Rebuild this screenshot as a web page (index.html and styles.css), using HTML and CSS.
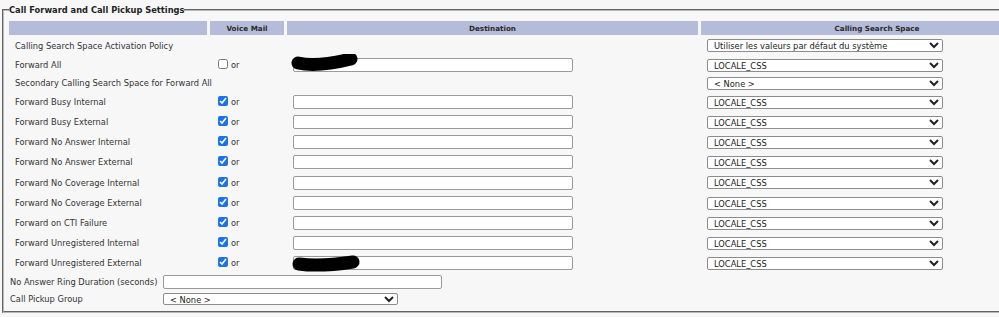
FILE: index.html
```html
<!DOCTYPE html>
<html lang="en">
<head>
<meta charset="utf-8">
<title>Call Forward and Call Pickup Settings</title>
<link rel="stylesheet" href="styles.css">
</head>
<body>
<fieldset class="box">
  <legend class="legend">Call Forward and Call Pickup Settings</legend>
  <div class="grid">
    <div class="th"></div>
    <div class="th">Voice Mail</div>
    <div class="th">Destination</div>
    <div class="th th-css">Calling Search Space</div>

    <div class="lbl">Calling Search Space Activation Policy</div>
    <div class="vm"></div>
    <div class="dest"></div>
    <div class="css"><select class="sel"><option>Utiliser les valeurs par défaut du système</option></select></div>

    <div class="lbl">Forward All</div>
    <div class="vm"><input type="checkbox" class="chk"><span>or</span></div>
    <div class="dest">
      <input type="text" class="txt">
      <svg class="redact r1" width="80" height="24" viewBox="0 0 80 24"><path d="M11 9 C 24 12, 44 10, 64 5" fill="none" stroke="#000" stroke-width="13" stroke-linecap="round"/></svg>
    </div>
    <div class="css"><select class="sel"><option>LOCALE_CSS</option></select></div>

    <div class="lbl">Secondary Calling Search Space for Forward All</div>
    <div class="vm"></div>
    <div class="dest"></div>
    <div class="css"><select class="sel"><option>&lt; None &gt;</option></select></div>

    <div class="lbl">Forward Busy Internal</div>
    <div class="vm"><input type="checkbox" class="chk" checked><span>or</span></div>
    <div class="dest"><input type="text" class="txt"></div>
    <div class="css"><select class="sel"><option>LOCALE_CSS</option></select></div>

    <div class="lbl">Forward Busy External</div>
    <div class="vm"><input type="checkbox" class="chk" checked><span>or</span></div>
    <div class="dest"><input type="text" class="txt"></div>
    <div class="css"><select class="sel"><option>LOCALE_CSS</option></select></div>

    <div class="lbl">Forward No Answer Internal</div>
    <div class="vm"><input type="checkbox" class="chk" checked><span>or</span></div>
    <div class="dest"><input type="text" class="txt"></div>
    <div class="css"><select class="sel"><option>LOCALE_CSS</option></select></div>

    <div class="lbl">Forward No Answer External</div>
    <div class="vm"><input type="checkbox" class="chk" checked><span>or</span></div>
    <div class="dest"><input type="text" class="txt"></div>
    <div class="css"><select class="sel"><option>LOCALE_CSS</option></select></div>

    <div class="lbl">Forward No Coverage Internal</div>
    <div class="vm"><input type="checkbox" class="chk" checked><span>or</span></div>
    <div class="dest"><input type="text" class="txt"></div>
    <div class="css"><select class="sel"><option>LOCALE_CSS</option></select></div>

    <div class="lbl">Forward No Coverage External</div>
    <div class="vm"><input type="checkbox" class="chk" checked><span>or</span></div>
    <div class="dest"><input type="text" class="txt"></div>
    <div class="css"><select class="sel"><option>LOCALE_CSS</option></select></div>

    <div class="lbl">Forward on CTI Failure</div>
    <div class="vm"><input type="checkbox" class="chk" checked><span>or</span></div>
    <div class="dest"><input type="text" class="txt"></div>
    <div class="css"><select class="sel"><option>LOCALE_CSS</option></select></div>

    <div class="lbl">Forward Unregistered Internal</div>
    <div class="vm"><input type="checkbox" class="chk" checked><span>or</span></div>
    <div class="dest"><input type="text" class="txt"></div>
    <div class="css"><select class="sel"><option>LOCALE_CSS</option></select></div>

    <div class="lbl">Forward Unregistered External</div>
    <div class="vm"><input type="checkbox" class="chk" checked><span>or</span></div>
    <div class="dest">
      <input type="text" class="txt">
      <svg class="redact r2" width="84" height="26" viewBox="0 0 84 26"><path d="M12 13 C 26 15, 46 14, 66 11" fill="none" stroke="#000" stroke-width="13" stroke-linecap="round"/></svg>
    </div>
    <div class="css"><select class="sel"><option>LOCALE_CSS</option></select></div>
  </div>

  <div class="extra">
    <div class="xlbl">No Answer Ring Duration (seconds)</div>
    <div class="xcell"><input type="text" class="txt wide"></div>
    <div class="xlbl">Call Pickup Group</div>
    <div class="xcell"><select class="sel pick"><option>&lt; None &gt;</option></select></div>
  </div>
</fieldset>
</body>
</html>
```

FILE: styles.css
```css
html, body {
  margin: 0;
  padding: 0;
  overflow: hidden;
  background: #f7f7f7;
}

body {
  font-family: "DejaVu Sans", Verdana, sans-serif;
  font-size: 8.3px;
  color: #333;
}

.box {
  box-sizing: border-box;
  width: calc(100% - 2px);
  min-width: 0;
  margin: 0 0 0 2px;
  padding: 1px 0 4px 5px;
  border: 2px groove #b8b8b8;
  border-right: 0;
}

.legend {
  padding: 0;
  margin: 0;
  font-weight: bold;
  font-size: 8.3px;
  line-height: 20px;
  color: #222;
}

.grid {
  display: grid;
  grid-template-columns: 198px 74px 411px 1fr;
  grid-template-rows: 14px 21px 18px 18px 20px 20px 20px 20px 21px 20px 20px 20px 20px;
  column-gap: 3px;
}

.th {
  background: #b4bcd9;
  font-weight: bold;
  font-size: 7.2px;
  color: #2a2a2a;
  display: flex;
  align-items: center;
  justify-content: center;
}

.th-css {
  padding-left: 54px;
}

.lbl {
  display: flex;
  align-items: center;
  padding-left: 6px;
  white-space: nowrap;
}

.vm {
  display: flex;
  align-items: center;
  padding-left: 8px;
}

.chk {
  width: 10px;
  height: 10px;
  margin: 0 3px 2px 0;
  accent-color: #1a73e8;
}

.dest {
  position: relative;
  display: flex;
  align-items: center;
  padding-left: 6px;
}

.css {
  display: flex;
  align-items: center;
  padding-left: 6px;
}

.txt {
  box-sizing: border-box;
  width: 280px;
  height: 14px;
  margin: 0;
  padding: 0 3px;
  border: 1px solid #9a9a9a;
  border-radius: 2px;
  background: #fff;
  font: inherit;
}

.sel {
  box-sizing: border-box;
  width: 236px;
  height: 13px;
  margin: 0;
  padding: 0 0 0 2px;
  border: 1px solid #8c8c8c;
  border-radius: 2px;
  background-color: #fff;
  font-family: "DejaVu Sans", Verdana, sans-serif;
  font-size: 8.3px;
  color: #222;
}

.redact {
  position: absolute;
  left: 0;
  pointer-events: none;
}

.r1 { top: -2px; }
.r2 { top: -2px; }

.extra {
  display: grid;
  grid-template-columns: 153px auto;
  grid-template-rows: 18px 16px;
  padding-left: 1px;
}

.xlbl {
  display: flex;
  align-items: center;
  white-space: nowrap;
}

.xcell {
  display: flex;
  align-items: center;
}

.wide {
  width: 279px;
}

.pick {
  width: 235px;
  height: 12px;
}
```
